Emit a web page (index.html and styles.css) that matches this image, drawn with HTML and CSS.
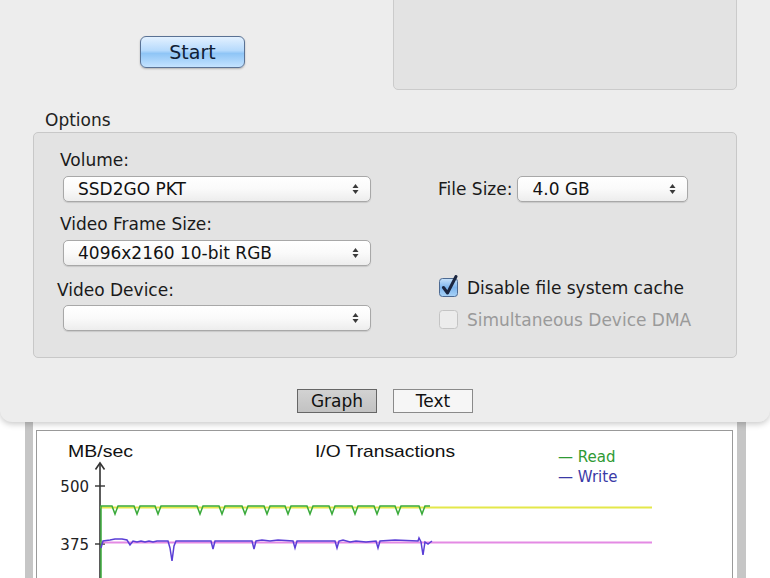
FILE: index.html
```html
<!DOCTYPE html>
<html lang="en">
<head>
	<meta charset="UTF-8">
	<meta name="viewport" content="width=device-width">
	<title>Disk Speed Test</title>
	<link rel="stylesheet" href="styles.css">
</head>
<body>
<div class="sheet">
	<div class="top">
		<div class="start-col"><button class="btn-start">Start</button></div>
		<div class="status-box"></div>
	</div>
	<div class="opt-title">Options</div>
	<div class="options">
		<div class="col-left">
			<div class="lbl">Volume:</div>
			<div class="popup"><span>SSD2GO PKT</span><svg class="arr" width="7" height="12" viewBox="0 0 7 12"><path d="M0.5 5L3.5 1L6.5 5Z M0.5 7L3.5 11L6.5 7Z"/></svg></div>
			<div class="lbl mt12">Video Frame Size:</div>
			<div class="popup"><span>4096x2160 10-bit RGB</span><svg class="arr" width="7" height="12" viewBox="0 0 7 12"><path d="M0.5 5L3.5 1L6.5 5Z M0.5 7L3.5 11L6.5 7Z"/></svg></div>
			<div class="lbl lbl-dev">Video Device:</div>
			<div class="popup pop-dev"><span></span><svg class="arr" width="7" height="12" viewBox="0 0 7 12"><path d="M0.5 5L3.5 1L6.5 5Z M0.5 7L3.5 11L6.5 7Z"/></svg></div>
		</div>
		<div class="col-right">
			<div class="fs-row">
				<span class="lbl">File Size:</span>
				<div class="popup pop-fs"><span>4.0 GB</span><svg class="arr" width="7" height="12" viewBox="0 0 7 12"><path d="M0.5 5L3.5 1L6.5 5Z M0.5 7L3.5 11L6.5 7Z"/></svg></div>
			</div>
			<div class="check chk1">
				<svg width="20" height="22" viewBox="0 0 20 22">
					<defs>
						<linearGradient id="cbg" x1="0" y1="0" x2="0" y2="1">
							<stop offset="0" stop-color="#c9e3fb"/>
							<stop offset="0.5" stop-color="#7db4ec"/>
							<stop offset="1" stop-color="#a9d3f8"/>
						</linearGradient>
					</defs>
					<rect x="0.5" y="3.5" width="18" height="18" rx="3" fill="url(#cbg)" stroke="#4d6a92"/>
					<path d="M4.5 12.5L8.5 18L17 1.5" fill="none" stroke="#1b2640" stroke-width="3" stroke-linecap="round" stroke-linejoin="round"/>
				</svg>
				<span>Disable file system cache</span>
			</div>
			<div class="check chk2 off">
				<svg width="20" height="20" viewBox="0 0 20 20"><rect x="0.5" y="0.5" width="18" height="18" rx="3" fill="#ececec" stroke="#c4c4c4"/></svg>
				<span>Simultaneous Device DMA</span>
			</div>
		</div>
	</div>
	<div class="tabs">
		<button class="tab active">Graph</button>
		<button class="tab">Text</button>
	</div>
</div>
<div class="gwrap">
	<div class="gbox">
		<svg class="chart" width="695" height="147" viewBox="37 431 695 147">
			<text x="68" y="457" class="ct" textLength="65" lengthAdjust="spacingAndGlyphs">MB/sec</text>
			<text x="315" y="457" class="ct" textLength="140" lengthAdjust="spacingAndGlyphs">I/O Transactions</text>
			<text x="558" y="462" class="lg rd">— Read</text>
			<text x="558" y="482" class="lg wr">— Write</text>
			<line x1="100" y1="463" x2="100" y2="578" stroke="#333" stroke-width="1.6"/>
			<path d="M95.5 469.5L100 463L104.5 469.5" fill="none" stroke="#333" stroke-width="1.6"/>
			<line x1="95" y1="486" x2="105" y2="486" stroke="#333" stroke-width="1.4"/>
			<line x1="95" y1="544" x2="105" y2="544" stroke="#333" stroke-width="1.4"/>
			<text x="89" y="492" class="tk">500</text>
			<text x="89" y="550" class="tk">375</text>
			<line x1="100" y1="507.5" x2="652" y2="507.5" stroke="#e4e84a" stroke-width="2"/>
			<line x1="100" y1="542.5" x2="652" y2="542.5" stroke="#e48ae4" stroke-width="2"/>
			<path d="M101 578L101 506L112 506L115 514L118 506L134 506L137 514L140 506L155 506L158 514L161 506L197 506L200 514L203 506L219 506L222 514L225 506L242 506L245 514L248 506L264 506L267 514L270 506L285 506L288 514L291 506L307 506L310 514L313 506L329 506L332 514L335 506L352 506L355 514L358 506L374 506L377 514L380 506L395 506L398 514L401 506L419 506L422 514L425 506L430 506" fill="none" stroke="#3aaa3a" stroke-width="1.5"/>
			<path d="M101 548L103 541L110 540L115 539L122 539L127 540L130 545L133 541L137 542L141 541L145 542L149 541L153 542L157 541L168 541L170 548L172 561L174 546L176 541L211 541L213 549L215 541L252 541L254 549L256 541L262 540L270 541L278 540L293 541L295 548L297 541L335 541L337 548L339 541L343 540L350 542L356 541L366 542L376 541L378 548L380 541L395 540L418 541L419 538L421 542L423 555L425 542L428 544L432 541" fill="none" stroke="#5a3ed6" stroke-width="1.5"/>
		</svg>
	</div>
</div>
</body>
</html>
```

FILE: styles.css
```css
*{margin:0;padding:0;box-sizing:border-box;}
body{background:#fff;width:770px;height:578px;overflow:hidden;font-family:"DejaVu Sans",Verdana,sans-serif;color:#1a1a1a;}
.sheet{position:relative;z-index:1;width:770px;height:422px;background:#ededed;border-radius:0 0 12px 12px;box-shadow:0 2px 6px rgba(0,0,0,.22);padding:0 33px;}
.top{display:flex;height:90px;}
.start-col{width:360px;}
.btn-start{margin:36px 0 0 107px;width:105px;height:32px;border:1px solid #5a7294;border-radius:6px;background:linear-gradient(#e3f1ff,#b6dafc 45%,#8fc5f6 55%,#c4e3ff);box-shadow:0 1px 2px rgba(0,0,0,.25);font-family:"DejaVu Sans",sans-serif;font-size:19px;color:#102035;}
.status-box{flex:1;margin-top:-10px;height:100px;background:#e3e3e3;border:1px solid #cbcbcb;border-radius:5px;}
.opt-title{margin-top:20px;padding-left:12px;height:20px;line-height:20px;font-size:17px;color:#222;}
.options{margin-top:2px;height:226px;background:#e3e3e3;border:1px solid #c8c8c8;border-radius:5px;padding:17px 0 0 23px;display:flex;}
.col-left{width:314px;}
.col-right{margin-left:67px;}
.lbl{height:20px;line-height:20px;font-size:17px;padding-left:3px;}
.mt12{margin-top:12px;}
.lbl-dev{margin-top:14px;padding-left:0;}
.popup{margin:6px 0 0 6px;width:308px;height:26px;display:flex;align-items:center;justify-content:space-between;padding:0 11px 0 14px;background:linear-gradient(#fff,#fafafa 50%,#ededed);border:1px solid #a8a8a8;border-radius:5px;box-shadow:0 1px 1px rgba(0,0,0,.12);font-size:17px;color:#111;}
.pop-dev{margin-top:5px;}
.arr{fill:#3a3a3a;flex:none;}
.fs-row{margin-top:26px;display:flex;align-items:center;}
.fs-row .lbl{padding-left:0;}
.pop-fs{margin:0 0 0 5px;width:171px;}
.check{display:flex;align-items:center;font-size:17px;}
.check svg{margin-left:1px;flex:none;}
.check span{margin-left:8px;}
.chk1{margin-top:75px;height:22px;}
.chk1 svg{margin-top:-4px;}
.chk2{margin-top:11px;height:20px;}
.off span{color:#9a9a9a;}
.tabs{margin-top:31px;display:flex;justify-content:center;gap:16px;}
.tab{width:80px;height:24px;font-family:"DejaVu Sans",sans-serif;font-size:17px;line-height:20px;color:#111;background:#f6f6f6;border:1px solid #8a8a8a;}
.tab.active{background:linear-gradient(#d2d2d2,#c2c2c2);border-color:#666;}
.gwrap{margin-left:25px;width:721px;height:156px;border-left:8px solid #c6c6c6;border-right:9px solid #c6c6c6;background:#fff;padding:8px 0 0 3px;}
.gbox{width:697px;height:148px;border:1px solid #9a9a9a;border-bottom:none;background:#fff;}
.chart{display:block;}
.ct{font-family:"Liberation Sans",Arial,sans-serif;font-size:17px;fill:#111;}
.lg{font-family:"DejaVu Sans",sans-serif;font-size:15px;}
.rd{fill:#2f9a34;}
.wr{fill:#3b3aa6;}
.tk{font-family:"DejaVu Sans",sans-serif;font-size:15px;fill:#222;text-anchor:end;}
```
